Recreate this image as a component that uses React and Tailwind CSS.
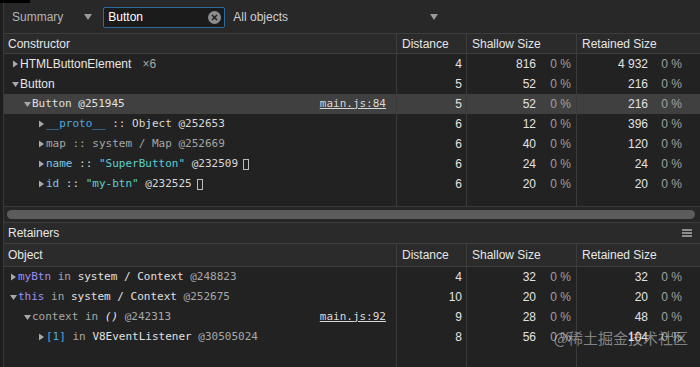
import React from "react";

const sans = { fontFamily: '"Liberation Sans", Arial, sans-serif' };
const mono = { fontFamily: '"DejaVu Sans Mono", "Liberation Mono", monospace' };

function Tri({ open }) {
  return (
    <svg width="7" height="8" viewBox="0 0 7 8" className="shrink-0 mr-[1px]">
      {open ? (
        <path d="M0 2 L7 2 L3.5 7 Z" fill="#a8a8a8" />
      ) : (
        <path d="M1 0.5 L6 4 L1 7.5 Z" fill="#a8a8a8" />
      )}
    </svg>
  );
}

function Box() {
  return <span className="inline-block w-[6px] h-[11px] border border-[#bdbdbd] ml-[5px] align-middle" />;
}

function Nums({ d, s, r }) {
  return (
    <>
      <div className="border-l border-[#3a3a3a] flex items-center justify-end pr-[4px] text-[12px] text-[#e2e2e2]" style={sans}>{d}</div>
      <div className="border-l border-[#3a3a3a] flex items-center justify-end pr-[5px] text-[12px]" style={sans}>
        <span className="text-[#e2e2e2]">{s}</span>
        <span className="w-[35px] text-right text-[#a0a0a0]">0 %</span>
      </div>
      <div className="border-l border-[#3a3a3a] flex items-center justify-end pr-[18px] text-[12px]" style={sans}>
        <span className="text-[#e2e2e2]">{r}</span>
        <span className="w-[34px] text-right text-[#a0a0a0]">0 %</span>
      </div>
    </>
  );
}

function Row({ indent, open, children, link, d, s, r, hi }) {
  return (
    <div className={"grid grid-cols-[392px_70px_110px_1fr] h-[20px] " + (hi ? "bg-[#404040]" : "")}>
      <div className="flex items-center pr-[10px] min-w-0" style={{ paddingLeft: indent }}>
        <Tri open={open} />
        <div className="flex-1 flex items-center whitespace-nowrap overflow-hidden">{children}</div>
        {link && (
          <span className="text-[11px] text-[#d8d8d8] underline" style={mono}>{link}</span>
        )}
      </div>
      <Nums d={d} s={s} r={r} />
    </div>
  );
}

function Header({ first, tall }) {
  return (
    <div className={"grid grid-cols-[392px_70px_110px_1fr] bg-[#2b2b2b] border-b border-[#3d3d3d] text-[12px] text-[#e6e6e6] " + (tall ? "h-[23px]" : "h-[20px]")} style={sans}>
      <div className="flex items-center pl-[4px]">{first}</div>
      <div className="flex items-center pl-[5px] border-l border-[#3d3d3d]">Distance</div>
      <div className="flex items-center pl-[5px] border-l border-[#3d3d3d]">Shallow Size</div>
      <div className="flex items-center pl-[5px] border-l border-[#3d3d3d]">Retained Size</div>
    </div>
  );
}

function Filler() {
  return (
    <div className="flex-1 grid grid-cols-[392px_70px_110px_1fr]">
      <div />
      <div className="border-l border-[#3a3a3a]" />
      <div className="border-l border-[#3a3a3a]" />
      <div className="border-l border-[#3a3a3a]" />
    </div>
  );
}

export default function App() {
  return (
    <div className="w-[700px] h-[367px] bg-[#222222] flex relative overflow-hidden" style={sans}>
      <div className="absolute left-0 top-0 w-[30px] h-[3px] bg-black" />
      <div className="w-[4px] bg-[#1e1e1e] border-r border-[#3a3a3a]" />
      <div className="flex-1 flex flex-col min-w-0">
        {/* toolbar */}
        <div className="h-[34px] shrink-0 bg-[#282828] border-b border-[#3d3d3d] flex items-center text-[12px] pt-[1px]">
          <span className="ml-[8px] text-[#b4b4b4]">Summary</span>
          <svg width="8" height="6" viewBox="0 0 8 6" className="ml-[21px]"><path d="M0 0 L8 0 L4 6 Z" fill="#9a9a9a" /></svg>
          <div className="ml-[11px] w-[122px] h-[21px] bg-[#1b1b1b] border border-[#2e6a9a] rounded-[2px] flex items-center pl-[4px] pr-[3px]">
            <span className="flex-1 text-white">Button</span>
            <span className="w-[13px] h-[13px] rounded-full bg-[#8c8c8c] flex items-center justify-center">
              <svg width="7" height="7" viewBox="0 0 7 7"><path d="M1 1 L6 6 M6 1 L1 6" stroke="#1e1e1e" strokeWidth="1.5" /></svg>
            </span>
          </div>
          <span className="ml-[8px] text-[#cfcfcf]">All objects</span>
          <svg width="8" height="6" viewBox="0 0 8 6" className="ml-[142px]"><path d="M0 0 L8 0 L4 6 Z" fill="#9a9a9a" /></svg>
        </div>
        {/* top table */}
        <div className="h-[172px] shrink-0 flex flex-col">
          <Header first="Constructor" />
          <Row indent={8} d="4" s="816" r="4 932">
            <span className="text-[12px] text-[#e6e6e6]" style={sans}>HTMLButtonElement</span>
            <span className="ml-[11px] text-[12px] text-[#a8a8a8]" style={sans}>×6</span>
          </Row>
          <Row indent={8} open d="5" s="52" r="216">
            <span className="text-[12px] text-[#e6e6e6]" style={sans}>Button</span>
          </Row>
          <Row indent={20} open hi link="main.js:84" d="5" s="52" r="216">
            <span className="text-[11px] text-[#e0e0e0]" style={mono}>Button @251945</span>
          </Row>
          <Row indent={34} d="6" s="12" r="396">
            <span className="text-[11px] text-[#d8d8d8]" style={mono}>
              <span className="text-[#4fa8e0]">__proto__</span> :: Object @252653
            </span>
          </Row>
          <Row indent={34} d="6" s="40" r="120">
            <span className="text-[11px] text-[#a6a6a6]" style={mono}>map :: system / Map @252669</span>
          </Row>
          <Row indent={34} d="6" s="24" r="24">
            <span className="text-[11px] text-[#d8d8d8] flex items-center" style={mono}>
              <span className="text-[#7fc6e6]">name</span>&nbsp;::&nbsp;<span className="text-[#5ad0d0]">"SuperButton"</span>&nbsp;@232509<Box />
            </span>
          </Row>
          <Row indent={34} d="6" s="20" r="20">
            <span className="text-[11px] text-[#d8d8d8] flex items-center" style={mono}>
              <span className="text-[#7fc6e6]">id</span>&nbsp;::&nbsp;<span className="text-[#5ad0d0]">"my-btn"</span>&nbsp;@232525<Box />
            </span>
          </Row>
          <Filler />
        </div>
        {/* scrollbar */}
        <div className="h-[16px] shrink-0 border-t border-[#3a3a3a] bg-[#262626] flex items-center pl-[3px] pr-[5px]">
          <div className="flex-1 h-[9px] rounded-full bg-[#5c5c5c]" />
        </div>
        {/* retainers bar */}
        <div className="h-[22px] shrink-0 bg-[#2a2a2a] border-t border-b border-[#3d3d3d] flex items-center justify-between pl-[4px] pr-[8px] text-[12px] text-[#e6e6e6]">
          <span>Retainers</span>
          <svg width="10" height="8" viewBox="0 0 10 8"><path d="M0 1 H10 M0 4 H10 M0 7 H10" stroke="#b0b0b0" strokeWidth="1.3" /></svg>
        </div>
        {/* bottom table */}
        <div className="flex-1 flex flex-col">
          <Header first="Object" tall />
          <Row indent={6} d="4" s="32" r="32">
            <span className="text-[11px] text-[#a8a8a8]" style={mono}>
              <span className="text-[#9d90f2]">myBtn</span> in <span className="text-[#e0e0e0]">system / Context</span> @248823
            </span>
          </Row>
          <Row indent={6} open d="10" s="20" r="20">
            <span className="text-[11px] text-[#a8a8a8]" style={mono}>
              <span className="text-[#9d90f2]">this</span> in <span className="text-[#e0e0e0]">system / Context</span> @252675
            </span>
          </Row>
          <Row indent={20} open link="main.js:92" d="9" s="28" r="48">
            <span className="text-[11px] text-[#a8a8a8]" style={mono}>
              context in <span className="italic text-[#e6e6e6]">()</span> @242313
            </span>
          </Row>
          <Row indent={34} d="8" s="56" r="104">
            <span className="text-[11px] text-[#a8a8a8]" style={mono}>
              <span className="text-[#4fa8e0]">[1]</span> in <span className="text-[#e0e0e0]">V8EventListener</span> @30505024
            </span>
          </Row>
          <Filler />
        </div>
      </div>
      <div className="absolute right-[12px] bottom-[18px] text-[15px] text-white/45 pointer-events-none" style={{ fontFamily: '"Noto Sans CJK SC", "Liberation Sans", sans-serif' }}>
        @稀土掘金技术社区
      </div>
    </div>
  );
}
